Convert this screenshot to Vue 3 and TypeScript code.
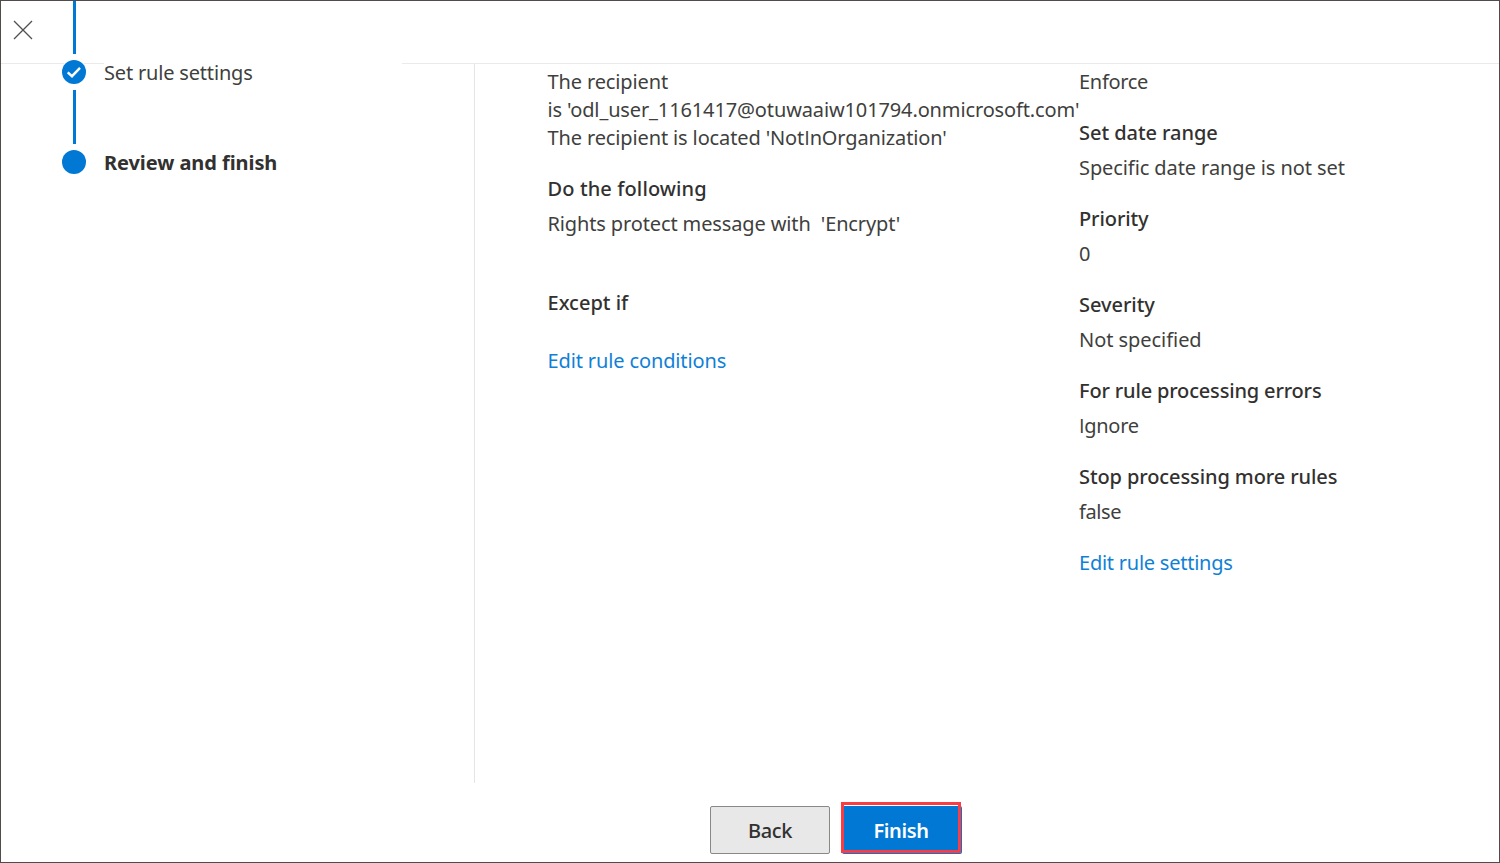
<script setup lang="ts">
interface Field { label?: string; lines?: string[]; kind: string }

const conditions: Field[] = [
  { kind: 'recipient', lines: ['The recipient', "is 'odl_user_1161417@otuwaaiw101794.onmicrosoft.com'", "The recipient is located 'NotInOrganization'"] },
  { kind: 'action', label: 'Do the following', lines: ["Rights protect message with \u00a0'Encrypt'"] },
  { kind: 'except', label: 'Except if' },
]
const settings: Field[] = [
  { kind: 'mode', lines: ['Enforce'] },
  { kind: 'range', label: 'Set date range', lines: ['Specific date range is not set'] },
  { kind: 'priority', label: 'Priority', lines: ['0'] },
  { kind: 'severity', label: 'Severity', lines: ['Not specified'] },
  { kind: 'errors', label: 'For rule processing errors', lines: ['Ignore'] },
  { kind: 'stop', label: 'Stop processing more rules', lines: ['false'] },
]

// The capital I is set in a face that draws it as a plain stem.
const parts = (text: string): string[] => text.split(/(I)/).filter(Boolean)
</script>

<template>
  <main class="wizard">
    <header class="topbar"></header>
    <nav class="sidebar">
      <button class="close" aria-label="Close">
        <svg width="20" height="20" viewBox="0 0 20 20"><path d="M1 1 19 19M19 1 1 19" /></svg>
      </button>
      <div class="steps">
        <span class="line"></span>
        <div class="step">
          <span class="dot"><svg width="24" height="24" viewBox="0 0 24 24"><path d="M5.7 12.3 10 16.2 18 7.8" /></svg></span>
          <span class="name">Set rule settings</span>
        </div>
        <span class="line"></span>
        <div class="step current">
          <span class="dot"></span>
          <span class="name">Review and finish</span>
        </div>
      </div>
    </nav>
    <section class="content">
      <div class="col">
        <div v-for="f in conditions" :key="f.kind" class="field" :class="f.kind">
          <h3 v-if="f.label">{{ f.label }}</h3>
          <p v-for="l in f.lines" :key="l"><span v-for="(t, i) in parts(l)" :key="i" :class="{ stem: t === 'I' }">{{ t }}</span></p>
        </div>
        <a class="edit">Edit rule conditions</a>
      </div>
      <div class="col">
        <div v-for="f in settings" :key="f.kind" class="field" :class="f.kind">
          <h3 v-if="f.label">{{ f.label }}</h3>
          <p v-for="l in f.lines" :key="l"><span v-for="(t, i) in parts(l)" :key="i" :class="{ stem: t === 'I' }">{{ t }}</span></p>
        </div>
        <a class="edit narrow">Edit rule settings</a>
      </div>
    </section>
    <footer class="actions">
      <button class="btn back">Back</button>
      <span class="highlight"><button class="btn primary">Finish</button></span>
    </footer>
  </main>
</template>

<style>
body { margin: 0; background: #fff; }
</style>

<style scoped>
.wizard { box-sizing: border-box; width: 1500px; height: 863px; border: 1px solid #514b4c; display: grid; grid-template: 63px 719px 79px / 473px 1fr; overflow: hidden; font: 400 20px/28px "Noto Sans", "Open Sans", sans-serif; letter-spacing: -0.13px; color: #403f3e; background: #fff; }
.topbar { grid-area: 1 / 1 / 2 / 3; box-sizing: border-box; border-bottom: 1px solid #eaeaea; }
.sidebar { grid-area: 1 / 1 / 3 / 2; display: flex; align-items: flex-start; }
.close { box-sizing: border-box; width: 61px; height: 63px; padding: 19px 0 24px 12px; border: 0; background: none; display: block; text-align: left; }
.close svg { display: block; }
.close path { stroke: #505050; stroke-width: 1.3; fill: none; }
.steps { display: flex; flex-direction: column; gap: 6px; }
.line { width: 3px; height: 54px; margin-left: 11px; background: #0078d4; }
.line:first-child { height: 53px; }
.step { display: flex; height: 24px; align-items: center; }
.dot { width: 24px; height: 24px; border-radius: 50%; background: #0078d4; box-shadow: 0 0 0 1px #fff; }
.dot svg { display: block; }
.dot path { fill: none; stroke: #fff; stroke-width: 2.4; }
.name { width: 298px; margin-left: 18px; padding-top: 2px; background: #fff; letter-spacing: -0.18px; }
.current .name { font-weight: 700; letter-spacing: -0.07px; color: #323130; }
.content { grid-area: 2 / 2; border-left: 1px solid #e5e5e5; padding: 4px 0 0 72.5px; display: grid; grid-template-columns: 531.5px 1fr; }
h3, p { margin: 0; font-size: 20px; line-height: 28px; white-space: pre; }
p { font-weight: inherit; }
h3 { font-weight: 550; margin-bottom: 7px; color: #323130; }
.stem { font-family: "Open Sans", sans-serif; }
.field { margin-bottom: 23px; }
.action { margin-bottom: 51px; }
.action h3 { letter-spacing: 0.12px; }
.except { margin-bottom: 30px; }
.except h3 { letter-spacing: 0; }
.range h3, .severity h3 { letter-spacing: -0.05px; }
.priority h3, .stop h3 { letter-spacing: -0.1px; }
.errors h3 { letter-spacing: -0.17px; }
.mode p { letter-spacing: -0.3px; }
.severity p { letter-spacing: -0.05px; }
.range p { letter-spacing: -0.09px; }
.errors p { letter-spacing: -0.3px; }
.stop p { letter-spacing: -0.4px; }
.edit { color: #0f80d7; }
.narrow { letter-spacing: -0.24px; }
.actions { grid-area: 3 / 1 / 4 / 3; display: flex; padding: 23px 0 0 709px; align-items: flex-start; gap: 12px; }
.btn { box-sizing: border-box; display: block; width: 120px; height: 48px; padding: 2px 0 0; font: inherit; font-weight: 550; letter-spacing: -0.4px; border-radius: 2px; border: 1px solid #8a8886; background: #e8e8e8; color: #323130; }
.primary { border: 0; background: #0078d4; color: #fff; font-weight: 600; padding-right: 2px; }
.highlight { position: relative; }
.highlight::after { content: ""; position: absolute; inset: -4px 1px 1px -1px; border: 3px solid #fa3c44; }
</style>
